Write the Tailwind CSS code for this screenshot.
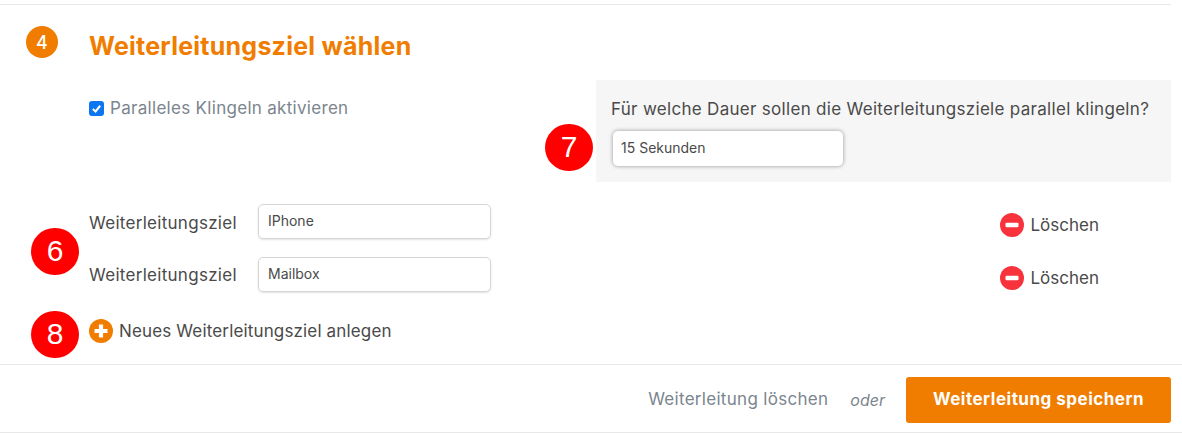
<!DOCTYPE html>
<html lang="de">
<head>
    <meta charset="UTF-8">
    <title>Weiterleitungsziel wählen</title>
    <script src="https://cdn.jsdelivr.net/npm/@tailwindcss/browser@4"></script>
</head>
<body class="bg-white font-['Inter',sans-serif] text-[#4a4a4a] h-[433px] overflow-hidden relative">
    <div class="w-[1171px] pt-1">
        <section class="border-t border-[#e8e8e8] h-[360px] flex flex-col">
            <!-- step heading -->
            <div class="flex pl-[26px] pt-[21px] h-[75px]">
                <div class="w-8 h-8 rounded-full bg-[#f07d00] text-white text-[18px] font-medium flex items-center justify-center">4</div>
                <h2 class="ml-[31px] mt-[4px] text-[25px] tracking-[0.24px] leading-8 font-bold text-[#f07d00]">Weiterleitungsziel wählen</h2>
            </div>

            <div class="flex justify-between h-[102px]">
                <label class="ml-[89px] mt-[17px] flex items-start gap-1.5 text-[17px] tracking-[0.3px] leading-[22px] text-[#7b858e]">
                    <span class="mt-1 w-[15px] h-[15px] rounded-[3px] bg-[#0b76ef] flex items-center justify-center">
                        <svg class="w-[11px] h-[11px]" viewBox="0 0 12 12" fill="none" stroke="white" stroke-width="2.2"><path d="M2 6.5 L5 9.2 L10 3"/></svg>
                    </span>
                    Paralleles Klingeln aktivieren
                </label>
                <div class="w-[575px] bg-[#f6f6f6] pl-[15px] pt-[18px]">
                    <p class="text-[17px] tracking-[0.3px] leading-[22px] text-[#4a4a4a]">Für welche Dauer sollen die Weiterleitungsziele parallel klingeln?</p>
                    <div class="mt-[11px] ml-[2px] w-[230px] h-[35px] bg-white rounded-[5px] shadow-[0_0_4px_rgba(0,0,0,0.4)] pl-[8px] text-[14px] leading-[33px]">15 Sekunden</div>
                </div>
            </div>

            <!-- targets -->
            <div class="flex flex-col gap-[18px] mt-[22px] pl-[89px]">
                <div class="flex items-center h-[35px]">
                    <span class="w-[169px] text-[17px] tracking-[0.29px] mt-[4px]">Weiterleitungsziel</span>
                    <div class="w-[233px] h-[35px] border border-[#d6d6d6] rounded-[5px] shadow-[0_1px_2px_rgba(0,0,0,0.12)] pl-[9px] text-[14px] leading-[31px]">IPhone</div>
                    <div class="ml-auto mr-[72px] mt-[6px] flex items-center gap-[7px] text-[17px]">
                        <svg class="w-6 h-6" viewBox="0 0 24 24"><circle cx="12" cy="12" r="12" fill="#f8333c"/><rect x="5.5" y="9.8" width="13" height="4.4" rx="1" fill="white"/></svg>
                        <span class="mt-[2px]">Löschen</span>
                    </div>
                </div>
                <div class="flex items-center h-[35px]">
                    <span class="w-[169px] text-[17px] tracking-[0.29px] mt-[3px]">Weiterleitungsziel</span>
                    <div class="w-[233px] h-[35px] border border-[#d6d6d6] rounded-[5px] shadow-[0_1px_2px_rgba(0,0,0,0.12)] pl-[9px] text-[14px] leading-[31px]">Mailbox</div>
                    <div class="ml-auto mr-[72px] mt-[6px] flex items-center gap-[7px] text-[17px]">
                        <svg class="w-6 h-6" viewBox="0 0 24 24"><circle cx="12" cy="12" r="12" fill="#f8333c"/><rect x="5.5" y="9.8" width="13" height="4.4" rx="1" fill="white"/></svg>
                        <span class="mt-[2px]">Löschen</span>
                    </div>
                </div>
            </div>

            <div class="mt-[25px] ml-[89px] flex items-center gap-[6px] text-[17px] tracking-[0.15px]">
                <svg class="w-6 h-6" viewBox="0 0 24 24"><circle cx="12" cy="12" r="12" fill="#f07d00"/><path d="M12 5.5 V18.5 M5.5 12 H18.5" stroke="white" stroke-width="4.2"/></svg>
                <span class="mt-[2px]">Neues Weiterleitungsziel anlegen</span>
            </div>
        </section>
    </div>

    <footer class="border-y border-[#e8e8e8] h-[69px] pt-[2px] flex items-center justify-end pr-[11px] text-[17px] text-[#7b858e]">
        <span class="tracking-[0.3px]">Weiterleitung löschen</span>
        <span class="italic text-[16px] ml-[22px] mr-[21px]">oder</span>
        <button class="w-[265px] h-[46px] bg-[#f07d00] text-white font-bold rounded-[3px] text-[17px] tracking-[0.5px]">Weiterleitung speichern</button>
    </footer>

    <!-- red callouts lying over the form -->
    <div class="absolute left-[545px] top-[124px] w-12 h-[47px] pb-[3px] rounded-full bg-[#fe0000] text-white font-['Liberation_Sans',sans-serif] text-[30px] flex items-center justify-center">7</div>
    <div class="absolute left-[31px] top-[228px] w-12 h-[47px] pb-[3px] rounded-full bg-[#fe0000] text-white font-['Liberation_Sans',sans-serif] text-[30px] flex items-center justify-center">6</div>
    <div class="absolute left-[31px] top-[311px] w-12 h-[47px] pb-[3px] rounded-full bg-[#fe0000] text-white font-['Liberation_Sans',sans-serif] text-[30px] flex items-center justify-center">8</div>
</body>
</html>
